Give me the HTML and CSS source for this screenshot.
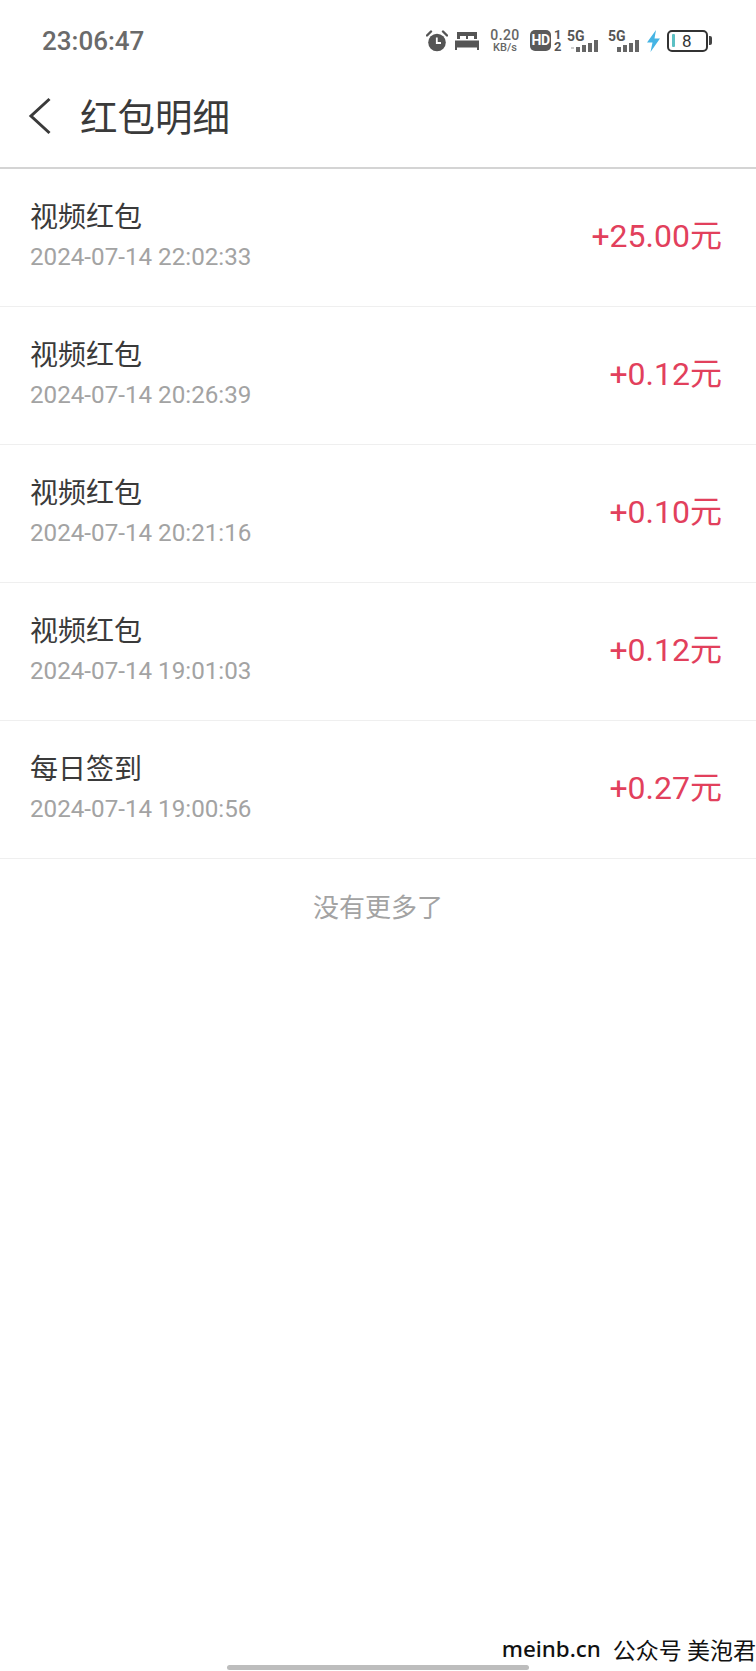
FILE: index.html
```html
<!DOCTYPE html>
<html lang="zh-CN">
<head>
  <meta charset="UTF-8" />
  <meta name="viewport" content="width=device-width, initial-scale=1.0"/>
  <title>红包明细</title>
  <link rel="stylesheet" href="styles.css">
</head>
<body>

  <div class="statusbar">
    <span class="time">23:06:47</span>
    <div class="status-icons">
      <svg class="ic-alarm" width="22" height="22" viewBox="0 0 22 22">
        <circle cx="11" cy="12.5" r="8.8" fill="#555"/>
        <path d="M1 5.5 L5 1.5 M21 5.5 L17 1.5" stroke="#555" stroke-width="2.4" stroke-linecap="round"/>
        <path d="M10.8 7.5 V13 H15" stroke="#fff" stroke-width="1.8" fill="none"/>
      </svg>
      <svg class="ic-bed" width="26" height="20" viewBox="0 0 26 20">
        <path d="M3 1 H23 V8 H3 Z" fill="#555"/>
        <path d="M6 5 H12 V8 H6 Z M14 5 H20 V8 H14 Z" fill="#fff"/>
        <path d="M1 9.5 H25 V19 H23 V16.5 H3 V19 H1 Z" fill="#555"/>
      </svg>
      <div class="speed">
        <span class="speed-num">0.20</span>
        <span class="speed-unit">KB/s</span>
      </div>
      <div class="hd">
        <span class="hd-box">HD</span>
        <span class="hd-nums"><span>1</span><span>2</span></span>
      </div>
      <div class="net">
        <span class="net-label">5G</span>
        <svg width="32" height="12" viewBox="0 0 32 12">
          <rect x="4" y="7" width="3" height="2" fill="#ccc"/>
          <rect x="9" y="7" width="4" height="5" fill="#666"/>
          <rect x="15" y="5" width="4" height="7" fill="#666"/>
          <rect x="21" y="3" width="4" height="9" fill="#666"/>
          <rect x="27" y="0" width="4" height="12" fill="#666"/>
        </svg>
      </div>
      <div class="net net-two">
        <span class="net-label">5G</span>
        <svg class="net-bars" width="26" height="12" viewBox="0 0 26 12">
          <rect x="1" y="7" width="4" height="5" fill="#666"/>
          <rect x="7" y="5" width="4" height="7" fill="#666"/>
          <rect x="13" y="3" width="4" height="9" fill="#666"/>
          <rect x="19" y="0" width="4" height="12" fill="#666"/>
        </svg>
      </div>
      <svg class="ic-bolt" width="13" height="22" viewBox="0 0 13 22">
        <path d="M9 0 L0 12.5 H5.5 L3.5 22 L13 8.5 H7.5 Z" fill="#45b4e4"/>
      </svg>
      <div class="battery">
        <span class="battery-level"></span>
        <span class="battery-num">8</span>
      </div>
    </div>
  </div>

  <header class="topbar">
    <svg class="back" width="24" height="38" viewBox="0 0 24 38">
      <path d="M21.5 2 L3 19 L21.5 36" fill="none" stroke="#3a3a3a" stroke-width="3"/>
    </svg>
    <h1>红包明细</h1>
  </header>

  <ul class="list">
    <li class="row">
      <div class="row-info">
        <p class="row-title">视频红包</p>
        <p class="row-date">2024-07-14 22:02:33</p>
      </div>
      <span class="amount">+25.00元</span>
    </li>
    <li class="row">
      <div class="row-info">
        <p class="row-title">视频红包</p>
        <p class="row-date">2024-07-14 20:26:39</p>
      </div>
      <span class="amount">+0.12元</span>
    </li>
    <li class="row">
      <div class="row-info">
        <p class="row-title">视频红包</p>
        <p class="row-date">2024-07-14 20:21:16</p>
      </div>
      <span class="amount">+0.10元</span>
    </li>
    <li class="row">
      <div class="row-info">
        <p class="row-title">视频红包</p>
        <p class="row-date">2024-07-14 19:01:03</p>
      </div>
      <span class="amount">+0.12元</span>
    </li>
    <li class="row">
      <div class="row-info">
        <p class="row-title">每日签到</p>
        <p class="row-date">2024-07-14 19:00:56</p>
      </div>
      <span class="amount">+0.27元</span>
    </li>
  </ul>

  <p class="no-more">没有更多了</p>

  <div class="bottom">
    <p class="watermark"><span class="wm-site">meinb.cn</span><span class="wm-name">公众号 美泡君</span></p>
    <div class="home-bar"></div>
  </div>

</body>
</html>
```

FILE: styles.css
```css
body {
  font-family: Roboto, "Noto Sans CJK SC", sans-serif;
  margin: 0;
  background-color: #fff;
  display: flex;
  flex-direction: column;
  height: 1671px;
  overflow: hidden;
}

p, h1, ul {
  margin: 0;
  padding: 0;
}

.statusbar {
  height: 77px;
  display: flex;
  align-items: center;
  justify-content: space-between;
  padding: 2px 48px 0 42px;
  flex-shrink: 0;
}

.time {
  font-size: 26px;
  font-weight: 500;
  color: #6a6a6a;
}

.status-icons {
  display: flex;
  align-items: center;
}

.ic-bed {
  margin-left: 6px;
}

.speed {
  display: flex;
  flex-direction: column;
  align-items: center;
  margin-left: 10px;
  color: #666;
  width: 30px;
}

.speed-num {
  font-size: 14px;
  line-height: 14px;
  font-weight: 500;
  letter-spacing: 0.4px;
}

.speed-unit {
  font-size: 11px;
  line-height: 11px;
  font-weight: 500;
}

.hd {
  display: flex;
  align-items: center;
  margin-left: 10px;
}

.hd-box {
  width: 21px;
  height: 21px;
  border-radius: 5px;
  background-color: #5a5a5a;
  color: #fff;
  font-size: 14px;
  font-weight: 700;
  letter-spacing: -0.5px;
  line-height: 21px;
  text-align: center;
}

.hd-nums {
  display: flex;
  flex-direction: column;
  width: 7px;
  margin-left: 3px;
  font-size: 13px;
  line-height: 12px;
  font-weight: 700;
  color: #555;
}

.net {
  display: flex;
  flex-direction: column;
  margin-left: 6px;
  width: 32px;
}

.net-two {
  margin-left: 9px;
}

.net-bars {
  margin-left: 8px;
}

.net-label {
  font-size: 14px;
  line-height: 12px;
  font-weight: 700;
  color: #555;
  margin-bottom: -2px;
}

.ic-bolt {
  margin-left: 7px;
}

.battery {
  position: relative;
  width: 37px;
  height: 18px;
  margin-left: 7px;
  border: 2px solid #333;
  border-radius: 5px;
  display: flex;
  align-items: center;
}

/* battery cap */
.battery::after {
  content: "";
  position: absolute;
  right: -6px;
  top: 4px;
  width: 3px;
  height: 9px;
  background-color: #444;
  border-radius: 0 2px 2px 0;
}

.battery-level {
  width: 3px;
  height: 13px;
  margin-left: 3px;
  background-color: #5cc0c4;
  border-radius: 1px;
}

.battery-num {
  margin-left: 7px;
  font-size: 17px;
  line-height: 18px;
  color: #333;
}

.topbar {
  height: 74px;
  display: flex;
  align-items: center;
  padding: 0 0 14px 28px;
  border-bottom: 2px solid #d4d4d4;
  flex-shrink: 0;
}

.back {
  flex-shrink: 0;
}

.topbar h1 {
  margin: 0 0 4px 28px;
  font-size: 37.5px;
  font-weight: 400;
  color: #3a3a3a;
}

.list {
  list-style: none;
}

.row {
  height: 137px;
  display: flex;
  align-items: center;
  justify-content: space-between;
  padding: 0 34px 0 30px;
  border-bottom: 1px solid #efefef;
}

.row-info {
  margin-bottom: 2px;
}

.row-title {
  font-size: 28px;
  line-height: 36px;
  color: #3a3a3a;
}

.row-date {
  margin-top: 5px;
  font-size: 24.2px;
  line-height: 32px;
  color: #a3a3a3;
}

.amount {
  margin-bottom: 10px;
  font-size: 32px;
  color: #e2405c;
}

.no-more {
  margin-top: 31px;
  text-align: center;
  font-size: 26px;
  line-height: 36px;
  color: #a3a3a3;
}

.bottom {
  margin-top: auto;
  display: flex;
  flex-direction: column;
}

.watermark {
  display: flex;
  justify-content: flex-end;
  align-items: center;
  gap: 12px;
  font-family: "Noto Sans", "Noto Sans CJK SC", sans-serif;
  font-size: 22.4px;
  line-height: 32px;
  font-weight: 500;
  color: #111;
}

.wm-name {
  font-family: "Noto Sans CJK SC", sans-serif;
  font-size: 23px;
  font-weight: 400;
}

.home-bar {
  width: 302px;
  height: 5px;
  margin: 0 0 1px 227px;
  background-color: #bdbdbd;
  border-radius: 3px;
}
```
